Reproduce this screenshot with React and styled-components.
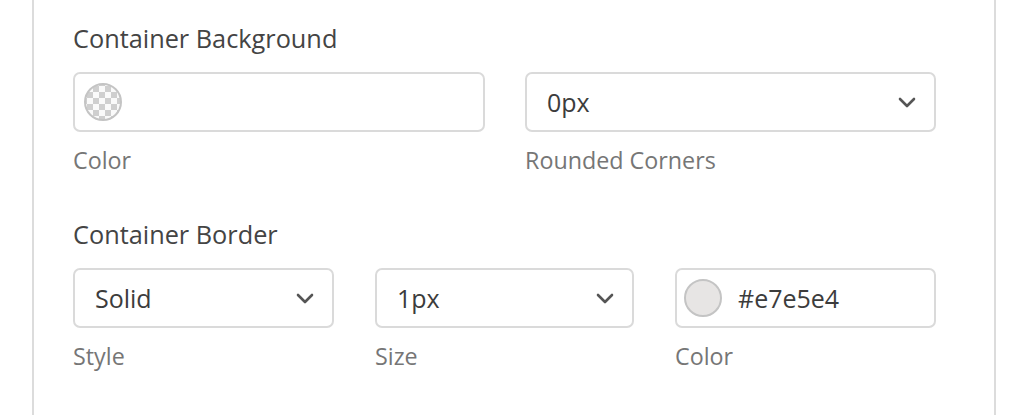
import React from "react";
import styled, { createGlobalStyle } from "styled-components";

const GlobalStyle = createGlobalStyle`
  html, body {
    margin: 0;
    padding: 0;
    background: #ffffff;
    font-family: "Open Sans", "Noto Sans", sans-serif;
  }
`;

const Panel = styled.div`
  margin-left: 32px;
  width: 964px;
  height: 415px;
  box-sizing: border-box;
  border-left: 2px solid #dcdcdc;
  border-right: 2px solid #dcdcdc;
  padding: 22px 57px 0 39px;
`;

const Section = styled.section`
  margin-bottom: 43px;
`;

const Heading = styled.div`
  font-size: 25.3px;
  line-height: 32px;
  color: #444;
  margin-bottom: 18px;
`;

const Row = styled.div`
  display: grid;
  grid-template-columns: ${({ $cols }) => $cols};
  column-gap: ${({ $gap }) => $gap || 40}px;
`;

const Field = styled.div`
  display: flex;
  flex-direction: column;
`;

const Box = styled.div`
  height: 60px;
  box-sizing: border-box;
  border: 2px solid #dadada;
  border-radius: 7px;
  display: flex;
  align-items: center;
  padding: 0 18px 0 ${({ $pad }) => $pad || 20}px;
  font-size: 25px;
  color: #3c3c3c;
`;

const Value = styled.span`
  flex: 1;
`;

const Label = styled.div`
  font-size: 23.3px;
  line-height: 30px;
  color: #767676;
  margin-top: 13px;
`;

const Swatch = styled.span`
  width: 38px;
  height: 38px;
  border-radius: 50%;
  box-sizing: border-box;
  border: 2px solid #c4c4c4;
  flex: none;
  margin-right: 16px;
  background: ${({ $color }) => $color || "#fff"};
  ${({ $checker }) =>
    $checker &&
    `
    background: repeating-conic-gradient(#cfcfcf 0% 25%, #fafafa 0% 50%) 1px 1px / 12px 12px;
  `}
`;

const Chevron = () => (
  <svg width="18" height="11" viewBox="0 0 18 11" fill="none">
    <path
      d="M2 2l7 7 7-7"
      stroke="#555"
      strokeWidth="2.6"
      strokeLinecap="round"
      strokeLinejoin="round"
    />
  </svg>
);

const Select = ({ value }) => (
  <Box>
    <Value>{value}</Value>
    <Chevron />
  </Box>
);

export default function App() {
  return (
    <>
      <GlobalStyle />
      <Panel>
        <Section>
          <Heading>Container Background</Heading>
          <Row $cols="412px 411px">
            <Field>
              <Box $pad={9}>
                <Swatch $checker />
              </Box>
              <Label>Color</Label>
            </Field>
            <Field>
              <Select value="0px" />
              <Label>Rounded Corners</Label>
            </Field>
          </Row>
        </Section>
        <Section>
          <Heading>Container Border</Heading>
          <Row $cols="261px 259px 261px" $gap={41}>
            <Field>
              <Select value="Solid" />
              <Label>Style</Label>
            </Field>
            <Field>
              <Select value="1px" />
              <Label>Size</Label>
            </Field>
            <Field>
              <Box $pad={7}>
                <Swatch $color="#e7e5e4" />
                <Value>#e7e5e4</Value>
              </Box>
              <Label>Color</Label>
            </Field>
          </Row>
        </Section>
      </Panel>
    </>
  );
}
